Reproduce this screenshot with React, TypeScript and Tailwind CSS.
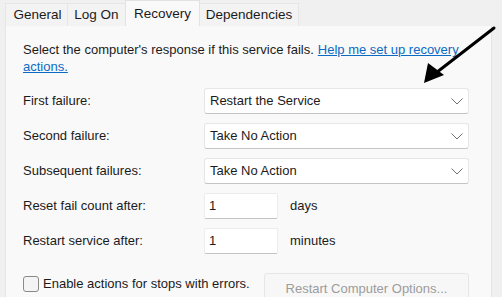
import React from "react";

function Chevron() {
  return (
    <svg width="12" height="7" viewBox="0 0 12 7" className="shrink-0">
      <path d="M0.5 0.5 L6 6 L11.5 0.5" fill="none" stroke="#707070" strokeWidth="1" />
    </svg>
  );
}

function Select({ value }: { value: string }) {
  return (
    <div className="w-[265px] h-[26px] bg-white border border-[#e6e6e6] border-b-[#c4c4c4] rounded-[3px] flex items-center justify-between pl-[5px] pr-[5px]">
      <span>{value}</span>
      <Chevron />
    </div>
  );
}

function Field({ value }: { value: string }) {
  return (
    <div className="w-[74px] h-[26px] bg-white border border-[#ececec] border-b-[#c4c4c4] rounded-[2px] flex items-center pl-[4px]">
      {value}
    </div>
  );
}

export default function App() {
  const font = { fontFamily: '"Liberation Sans", Arial, sans-serif' };
  return (
    <div
      className="relative w-[502px] h-[297px] bg-[#f0f0f0] overflow-hidden text-[13px] text-[#1b1b1b] flex flex-col"
      style={font}
    >
      <div className="flex items-end h-[26px] pl-[5px] text-[13.5px]">
        <div className="h-[23px] w-[62px] bg-[#f3f3f3] border-t border-l border-[#e6e6e6] flex items-center justify-center pl-[2px]">General</div>
        <div className="h-[23px] w-[58px] bg-[#f3f3f3] border-t border-l border-[#e6e6e6] flex items-center justify-center">Log On</div>
        <div className="h-[26px] w-[75px] bg-[#f9f9f9] border-t border-l border-r border-[#e2e2e2] flex items-start justify-center pt-[3px]">Recovery</div>
        <div className="h-[23px] w-[99px] bg-[#f3f3f3] border-t border-r border-[#e6e6e6] flex items-center justify-center">Dependencies</div>
      </div>
      <div className="flex flex-1">
        <div className="ml-[5px] w-[487px] bg-[#f9f9f9] border-l border-r border-[#e5e5e5] pl-[17px] pt-[15px] flex flex-col">
          <div className="leading-[17px] flex flex-col">
            <div className="flex gap-[4px]">
              <span>Select the computer's response if this service fails.</span>
              <span className="text-[#0b6ac4] underline">Help me set up recovery</span>
            </div>
            <div>
              <span className="text-[#0b6ac4] underline">actions.</span>
            </div>
          </div>
          <div className="mt-[13px] flex flex-col gap-[9px]">
            <div className="flex items-center">
              <div className="w-[181px]">First failure:</div>
              <Select value="Restart the Service" />
            </div>
            <div className="flex items-center">
              <div className="w-[181px]">Second failure:</div>
              <Select value="Take No Action" />
            </div>
            <div className="flex items-center">
              <div className="w-[181px]">Subsequent failures:</div>
              <Select value="Take No Action" />
            </div>
            <div className="flex items-center">
              <div className="w-[181px]">Reset fail count after:</div>
              <Field value="1" />
              <div className="ml-[12px]">days</div>
            </div>
            <div className="flex items-center">
              <div className="w-[181px]">Restart service after:</div>
              <Field value="1" />
              <div className="ml-[12px]">minutes</div>
            </div>
          </div>
          <div className="mt-[19px] flex items-start">
            <div className="mt-[3px] w-[16px] h-[16px] rounded-[3px] border border-[#8a8a8a] bg-[#f4f4f4]" />
            <div className="mt-[3px] ml-[4px] w-[221px] leading-[16px]">Enable actions for stops with errors.</div>
            <div className="w-[205px] h-[30px] bg-[#f7f7f7] border border-[#e6e6e6] rounded-[3px] flex items-start pt-[5px] justify-center text-[#9c9c9c]">
              Restart Computer Options...
            </div>
          </div>
        </div>
        <div className="flex-1 bg-[#f0f0f0]" />
      </div>
      <svg className="absolute left-0 top-0 pointer-events-none" width="502" height="297">
        <line x1="494" y1="28" x2="432" y2="76" stroke="#000" strokeWidth="3" strokeLinecap="round" />
        <polygon points="424,83 428,63 444,75" fill="#000" />
      </svg>
    </div>
  );
}
